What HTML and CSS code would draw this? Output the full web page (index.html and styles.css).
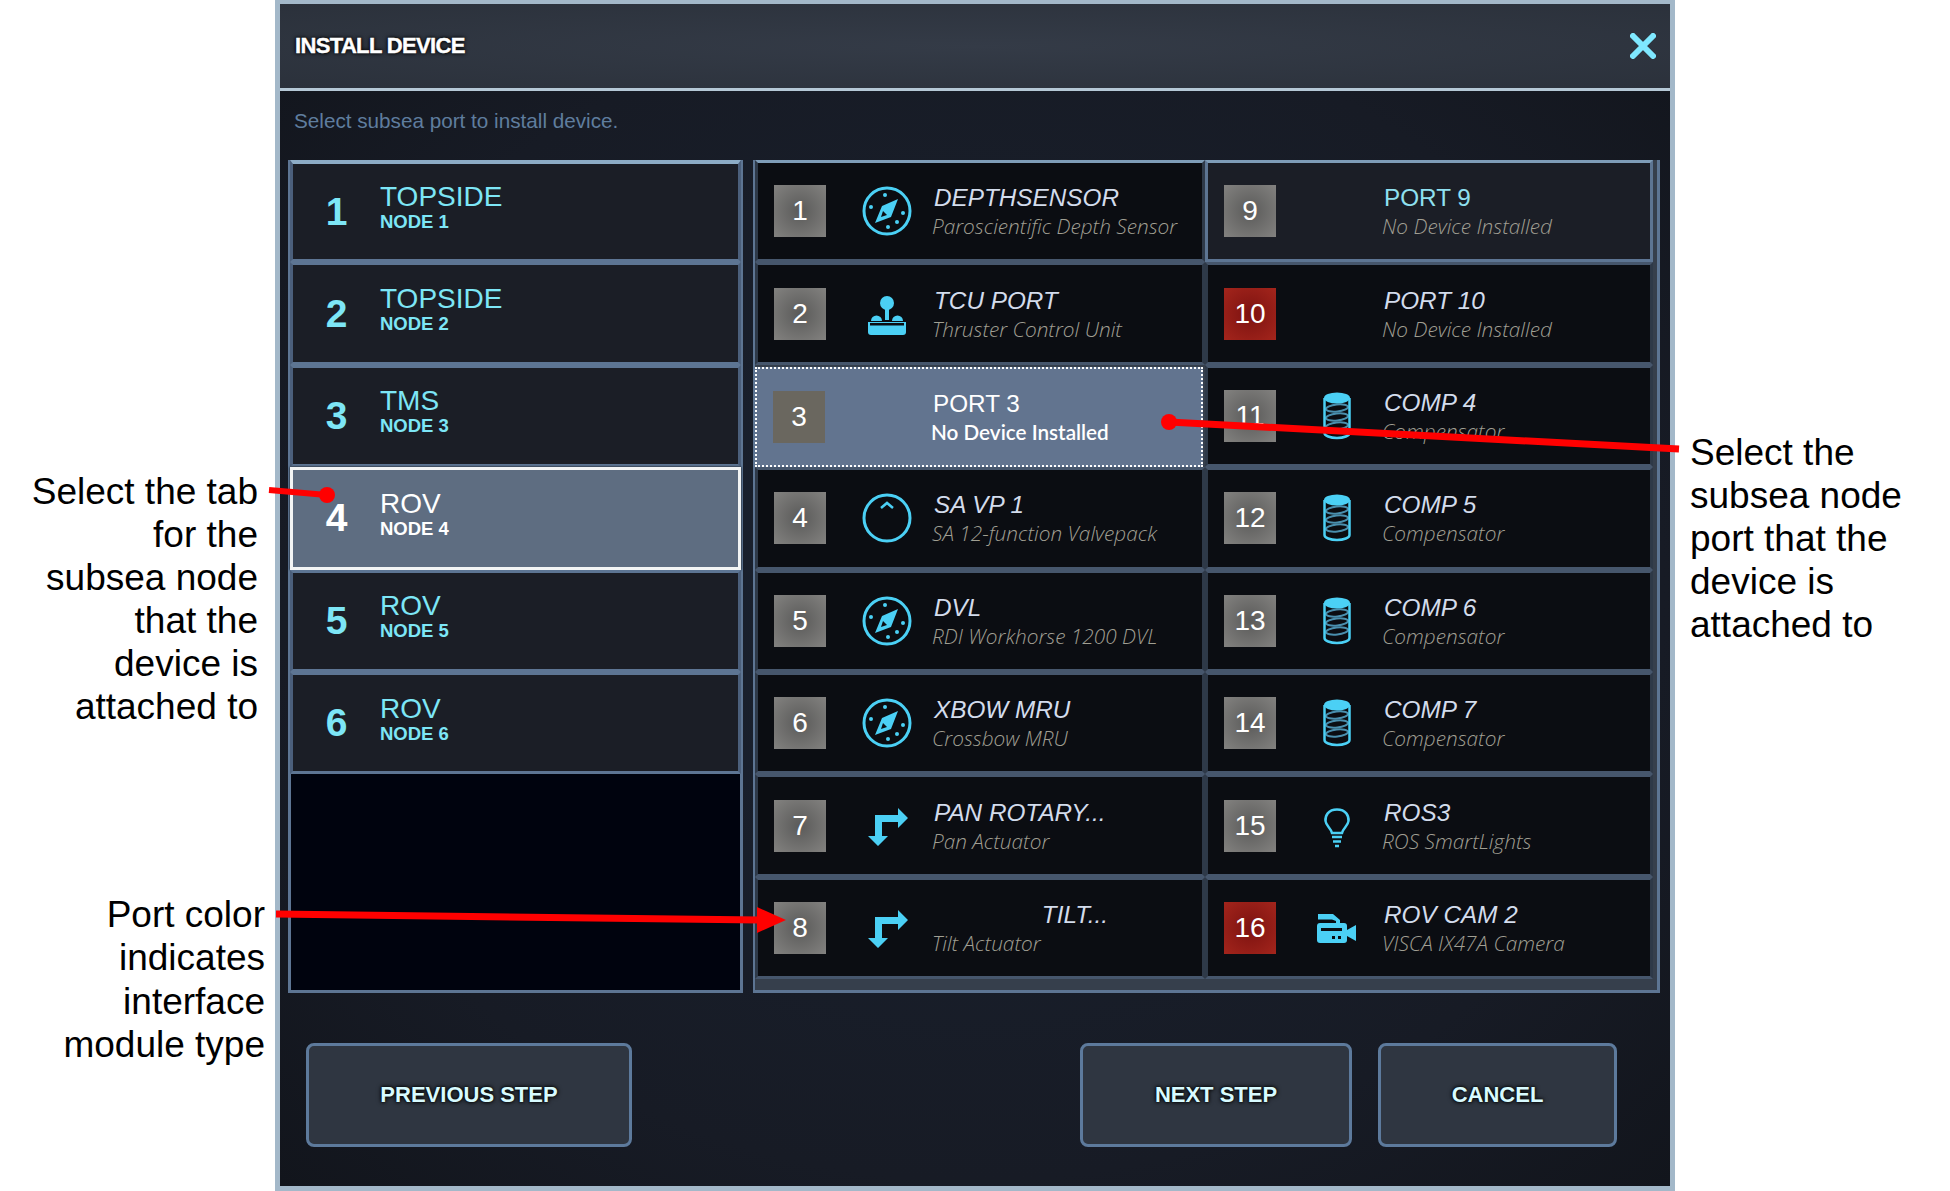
FILE: index.html
```html
<!DOCTYPE html>
<html lang="en">
<head>
    <meta charset="UTF-8">
    <title>Install Device</title>
    <link rel="stylesheet" href="styles.css">
</head>
<body>
    <svg width="0" height="0" class="defs">
        <symbol id="ico-compass" viewBox="0 0 50 50">
            <circle cx="25" cy="25" r="23" fill="none" stroke="currentColor" stroke-width="3"/>
            <path d="M36 13 L29 31 L13 37 L20 20 Z M21 25 L19 31 L25 29 Z" fill="currentColor" fill-rule="evenodd"/>
            <circle cx="23" cy="9" r="2" fill="currentColor"/><circle cx="9" cy="21" r="2" fill="currentColor"/>
            <circle cx="41" cy="27" r="2" fill="currentColor"/><circle cx="35" cy="36" r="2" fill="currentColor"/>
            <circle cx="26" cy="41" r="2" fill="currentColor"/>
        </symbol>
        <symbol id="ico-joystick" viewBox="0 0 50 50">
            <circle cx="25" cy="14" r="7" fill="currentColor"/>
            <rect x="23" y="18" width="4" height="13" fill="currentColor"/>
            <path d="M9 32 a5.500 5.500 0 0 1 11 0 Z M30 32 a5.500 5.500 0 0 1 11 0 Z" fill="currentColor"/>
            <path d="M6 33 H44 V43 a3 3 0 0 1 -3 3 H9 a3 3 0 0 1 -3 -3 Z" fill="currentColor"/>
            <rect x="8" y="34" width="34" height="2.500" fill="#0b0d12"/>
        </symbol>
        <symbol id="ico-gauge" viewBox="0 0 50 50">
            <circle cx="25" cy="25" r="23" fill="none" stroke="currentColor" stroke-width="3"/>
            <path d="M19 15 L25 10 L31 15" fill="none" stroke="currentColor" stroke-width="2.500"/>
        </symbol>
        <symbol id="ico-spring" viewBox="0 0 50 50">
            <ellipse cx="25" cy="17" rx="11" ry="3.500" transform="rotate(-6 25 17)" fill="none" stroke="#4a8fae" stroke-width="2"/>
            <ellipse cx="25" cy="26" rx="11" ry="3.500" transform="rotate(-6 25 26)" fill="none" stroke="#4a8fae" stroke-width="2"/>
            <ellipse cx="25" cy="35" rx="11" ry="3.500" transform="rotate(-6 25 35)" fill="none" stroke="#4a8fae" stroke-width="2"/>
            <ellipse cx="25" cy="7" rx="13" ry="5.500" fill="currentColor"/>
            <path d="M12.500 7 V42 a12.500 5 0 0 0 25 0 V7" fill="none" stroke="currentColor" stroke-width="2.500"/>
        </symbol>
        <symbol id="ico-arrows" viewBox="0 0 50 50">
            <path d="M36 7 L46 17 L36 27 V21 H20 V35 H26 L16 45 L6 35 H13 V14 H36 Z" fill="currentColor"/>
        </symbol>
        <symbol id="ico-bulb" viewBox="0 0 50 50">
            <path d="M25 8.500 C16 8.500 13 15 13.500 20 C14 25 19 27 20 32 H30 C31 27 36 25 36.500 20 C37 15 34 8.500 25 8.500 Z" fill="none" stroke="currentColor" stroke-width="2.500"/>
            <path d="M20 36 H30 M21 40.500 H29 M23 45 H27" stroke="currentColor" stroke-width="2.500"/>
        </symbol>
        <symbol id="ico-camera" viewBox="0 0 50 50">
            <path d="M6 11 H21 L28 17 V21 H24 V18 L20 16.500 H6 Z" fill="currentColor"/>
            <rect x="5" y="20" width="30" height="20" rx="3" fill="currentColor"/>
            <path d="M35 27 L44 22 V38 L35 33 Z" fill="currentColor"/>
            <rect x="9" y="25" width="21" height="3" fill="#0b0d12"/>
            <rect x="20" y="33" width="3" height="3" fill="#0b0d12"/>
            <rect x="26" y="33" width="3" height="3" fill="#0b0d12"/>
        </symbol>
    </svg>

    <div class="page">
        <div class="notes notes-left">
            <p class="note note-tab">Select the tab<br>for the<br>subsea node<br>that the<br>device is<br>attached to</p>
            <p class="note note-color">Port color<br>indicates<br>interface<br>module type</p>
        </div>

        <div class="dialog">
            <div class="dialog-head">
                <span class="dialog-title">INSTALL DEVICE</span>
                <svg class="dialog-close" width="26" height="26" viewBox="0 0 26 26"><path d="M3 3 L23 23 M23 3 L3 23" stroke="#7fe8ff" stroke-width="6" stroke-linecap="round"/></svg>
            </div>
            <div class="dialog-hint">Select subsea port to install device.</div>

            <div class="panels">
                <div class="tabs">
                    <div class="tab"><span class="tab-num">1</span><div class="tab-text"><div class="tab-name">TOPSIDE</div><div class="tab-node">NODE 1</div></div></div>
                    <div class="tab"><span class="tab-num">2</span><div class="tab-text"><div class="tab-name">TOPSIDE</div><div class="tab-node">NODE 2</div></div></div>
                    <div class="tab"><span class="tab-num">3</span><div class="tab-text"><div class="tab-name">TMS</div><div class="tab-node">NODE 3</div></div></div>
                    <div class="tab tab-on"><span class="tab-num">4</span><div class="tab-text"><div class="tab-name">ROV</div><div class="tab-node">NODE 4</div></div></div>
                    <div class="tab"><span class="tab-num">5</span><div class="tab-text"><div class="tab-name">ROV</div><div class="tab-node">NODE 5</div></div></div>
                    <div class="tab"><span class="tab-num">6</span><div class="tab-text"><div class="tab-name">ROV</div><div class="tab-node">NODE 6</div></div></div>
                </div>

                <div class="ports">
                    <div class="port"><span class="port-num">1</span><svg class="port-ico"><use href="#ico-compass"/></svg><div class="port-text"><div class="port-name">DEPTHSENSOR</div><div class="port-sub">Paroscientific Depth Sensor</div></div></div>
                    <div class="port port-empty"><span class="port-num">9</span><div class="port-ico"></div><div class="port-text"><div class="port-name port-upright">PORT 9</div><div class="port-sub">No Device Installed</div></div></div>
                    <div class="port"><span class="port-num">2</span><svg class="port-ico"><use href="#ico-joystick"/></svg><div class="port-text"><div class="port-name">TCU PORT</div><div class="port-sub">Thruster Control Unit</div></div></div>
                    <div class="port"><span class="port-num red">10</span><div class="port-ico"></div><div class="port-text"><div class="port-name">PORT 10</div><div class="port-sub">No Device Installed</div></div></div>
                    <div class="port port-on"><span class="port-num">3</span><div class="port-ico"></div><div class="port-text"><div class="port-name">PORT 3</div><div class="port-sub">No Device Installed</div></div></div>
                    <div class="port"><span class="port-num">11</span><svg class="port-ico"><use href="#ico-spring"/></svg><div class="port-text"><div class="port-name">COMP 4</div><div class="port-sub">Compensator</div></div></div>
                    <div class="port"><span class="port-num">4</span><svg class="port-ico"><use href="#ico-gauge"/></svg><div class="port-text"><div class="port-name">SA VP 1</div><div class="port-sub">SA 12-function Valvepack</div></div></div>
                    <div class="port"><span class="port-num">12</span><svg class="port-ico"><use href="#ico-spring"/></svg><div class="port-text"><div class="port-name">COMP 5</div><div class="port-sub">Compensator</div></div></div>
                    <div class="port"><span class="port-num">5</span><svg class="port-ico"><use href="#ico-compass"/></svg><div class="port-text"><div class="port-name">DVL</div><div class="port-sub">RDI Workhorse 1200 DVL</div></div></div>
                    <div class="port"><span class="port-num">13</span><svg class="port-ico"><use href="#ico-spring"/></svg><div class="port-text"><div class="port-name">COMP 6</div><div class="port-sub">Compensator</div></div></div>
                    <div class="port"><span class="port-num">6</span><svg class="port-ico"><use href="#ico-compass"/></svg><div class="port-text"><div class="port-name">XBOW MRU</div><div class="port-sub">Crossbow MRU</div></div></div>
                    <div class="port"><span class="port-num">14</span><svg class="port-ico"><use href="#ico-spring"/></svg><div class="port-text"><div class="port-name">COMP 7</div><div class="port-sub">Compensator</div></div></div>
                    <div class="port"><span class="port-num">7</span><svg class="port-ico"><use href="#ico-arrows"/></svg><div class="port-text"><div class="port-name">PAN ROTARY...</div><div class="port-sub">Pan Actuator</div></div></div>
                    <div class="port"><span class="port-num">15</span><svg class="port-ico"><use href="#ico-bulb"/></svg><div class="port-text"><div class="port-name">ROS3</div><div class="port-sub">ROS SmartLights</div></div></div>
                    <div class="port"><span class="port-num">8</span><svg class="port-ico"><use href="#ico-arrows"/></svg><div class="port-text"><div class="port-name port-right">TILT...</div><div class="port-sub">Tilt Actuator</div></div></div>
                    <div class="port"><span class="port-num red">16</span><svg class="port-ico"><use href="#ico-camera"/></svg><div class="port-text"><div class="port-name">ROV CAM 2</div><div class="port-sub">VISCA IX47A Camera</div></div></div>
                </div>
            </div>

            <div class="dialog-foot">
                <button class="btn btn-prev">PREVIOUS STEP</button>
                <button class="btn btn-next">NEXT STEP</button>
                <button class="btn btn-cancel">CANCEL</button>
            </div>
        </div>

        <div class="notes notes-right">
            <p class="note note-port">Select the<br>subsea node<br>port that the<br>device is<br>attached to</p>
        </div>
    </div>

    <!-- red callout lines drawn over the screenshot -->
    <svg class="callouts" width="1950" height="1191" viewBox="0 0 1950 1191">
        <path d="M269 490 L327 495" stroke="#f00" stroke-width="6"/>
        <circle cx="327" cy="495" r="8" fill="#f00"/>
        <path d="M1169 422 L1679 449" stroke="#f00" stroke-width="7"/>
        <circle cx="1169" cy="422" r="8" fill="#f00"/>
        <path d="M276 914 L760 920" stroke="#f00" stroke-width="7"/>
        <path d="M786 920 L757 907 V933 Z" fill="#f00"/>
    </svg>
</body>
</html>
```

FILE: styles.css
```css
* {
    box-sizing: border-box;
}

body {
    margin: 0;
    width: 1950px;
    height: 1191px;
    overflow: hidden;
    background: #fff;
    font-family: "Liberation Sans", Arial, sans-serif;
}

.defs {
    position: absolute;
}

.page {
    display: flex;
    height: 1191px;
}

/* annotation text either side of the dialog */
.notes {
    flex: none;
}

.notes-left {
    width: 275px;
    padding-top: 470px;
}

.notes-right {
    flex: 1;
    padding: 431px 0 0 15px;
}

.note {
    margin: 0;
    font-size: 37px;
    line-height: 43px;
    color: #000;
}

.note-tab {
    text-align: right;
    padding-right: 17px;
}

.note-color {
    text-align: right;
    padding-right: 10px;
    margin-top: 165px;
    line-height: 43.4px;
}

/* dialog */
.dialog {
    flex: none;
    width: 1400px;
    height: 1191px;
    border: 5px solid #a3b8c9;
    border-top-width: 4px;
    background: radial-gradient(ellipse at center, #1a2230 0%, #171b25 70%, #12151c 100%);
    display: flex;
    flex-direction: column;
}

.dialog-head {
    height: 87px;
    flex: none;
    display: flex;
    align-items: center;
    justify-content: space-between;
    padding: 0 14px 0 15px;
    background: radial-gradient(ellipse at center, #343b47 0%, #2b313b 100%);
    border-bottom: 3px solid #b5c8d6;
}

.dialog-title {
    font-size: 22px;
    font-weight: bold;
    letter-spacing: -0.65px;
    color: #fff;
    -webkit-text-stroke: 0.4px #fff;
    text-shadow: 0 0 3px #000, 0 0 5px #000;
}

.dialog-hint {
    height: 69px;
    flex: none;
    padding: 18px 0 0 14px;
    font-size: 20.7px;
    line-height: 24px;
    color: #5f7d9e;
}

.panels {
    display: flex;
    gap: 10px;
    padding: 0 10px 0 8px;
}

/* node tabs */
.tabs {
    width: 455px;
    height: 833px;
    background: #00030e;
    border: 3px solid #5d7593;
    border-top: none;
    display: flex;
    flex-direction: column;
}

.tab {
    height: 102.4px;
    flex: none;
    display: flex;
    align-items: center;
    padding-left: 20px;
    background: #1b1e26;
    border: 3px solid #5d7593;
    border-left-color: #4b5f7b;
    border-right-color: #4b5f7b;
    margin: 0 -1px;
    color: #7de6f6;
}

.tab:first-child {
    border-top: 4px solid #8dacc6;
}

.tab-on {
    background: #5e6d81;
    border: 3px solid #f2f4f4;
    color: #fff;
    box-shadow: 0 0 2px #000;
}

.tab-num {
    width: 47px;
    flex: none;
    font-size: 39px;
    font-weight: bold;
    text-align: center;
    margin-right: 20px;
}

.tab-text {
    margin-top: -7px;
}

.tab-name {
    font-size: 28px;
    line-height: 28px;
}

.tab-node {
    font-size: 18.5px;
    font-weight: bold;
    line-height: 22px;
}

/* port grid */
.ports {
    flex: none;
    width: 907px;
    height: 833px;
    background: #363f4c;
    border: 3px solid #5d7593;
    border-left-width: 2px;
    border-top: none;
    display: grid;
    grid-template-columns: 450px 448px;
    grid-auto-rows: 102.4px;
    align-content: start;
}

.port {
    display: flex;
    align-items: center;
    background: #0b0d12;
    border: 3px solid #46566c;
    border-left-color: #2e3948;
    border-right-color: #2e3948;
    padding-left: 16px;
}

.port:nth-child(-n+2) {
    border-top-color: #7f9db8;
}

.port-empty {
    background: #1b1e26;
    border-color: #5d7593;
    border-top-color: #7f9db8;
}

.port-on {
    background: #62748f;
    border: 2px dotted #fff;
    margin: 2px 2px 0 0;
}

.port-on .port-num {
    background: #6a675f;
}

.port-on .port-name,
.port-on .port-sub {
    color: #fff;
}

.port-on .port-sub {
    font-weight: 600;
    font-style: normal;
    font-family: Lato, sans-serif;
    font-size: 20.7px;
}

.port-on .port-name {
    font-style: normal;
}

.port-num {
    flex: none;
    width: 52px;
    height: 52px;
    display: flex;
    align-items: center;
    justify-content: center;
    font-size: 28px;
    color: #fff;
    background: radial-gradient(circle, #5a5a59 0%, #838280 100%);
}

.port-num.red {
    background: radial-gradient(circle, #7c1210 0%, #a4251c 100%);
}

.port-ico {
    flex: none;
    width: 50px;
    height: 50px;
    margin: 0 20px 0 36px;
    color: #4bd0f5;
}

.port-text {
    width: 222px;
    margin-top: 1px;
}

.port-name {
    font-size: 24.3px;
    line-height: 30px;
    font-style: italic;
    color: #d3dcec;
    padding-left: 2px;
}

.port-upright {
    font-style: normal;
    color: #8fe0f0;
}

.port-right {
    text-align: right;
    width: 176px;
}

.port-sub {
    font-family: "Open Sans", sans-serif;
    font-size: 20.8px;
    line-height: 27px;
    font-weight: 300;
    font-style: italic;
    color: #a09f93;
    white-space: nowrap;
}

/* footer buttons */
.dialog-foot {
    display: flex;
    padding: 50px 0 0 26px;
}

.btn {
    height: 104px;
    background: #2f3641;
    border: 3px solid #5d7a9c;
    border-radius: 8px;
    font-family: inherit;
    font-size: 22px;
    font-weight: bold;
    color: #d8fbff;
    text-shadow: 0 0 3px #000, 0 0 5px #000;
}

.btn-prev {
    width: 326px;
    margin-right: 448px;
}

.btn-next {
    width: 272px;
    margin-right: 26px;
}

.btn-cancel {
    width: 239px;
}

.callouts {
    position: absolute;
    top: 0;
    left: 0;
    pointer-events: none;
}
```
